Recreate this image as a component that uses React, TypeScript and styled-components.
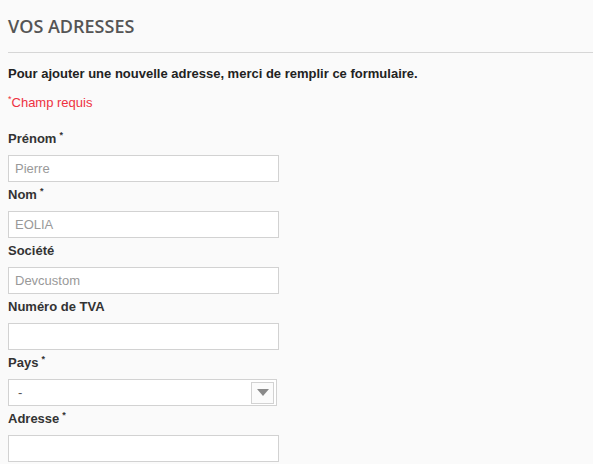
import { createGlobalStyle, styled } from "styled-components";

const GlobalStyle = createGlobalStyle`
  html, body {
    margin: 0;
    padding: 0;
    background: #fafafa;
  }
  body {
    font-family: "Liberation Sans", Arial, sans-serif;
    color: #333;
  }
`;

const Page = styled.div`
  padding: 0 0 0 8px;
  display: flex;
  flex-direction: column;
`;

const Title = styled.h1`
  margin: 0;
  padding: 14px 0 13px;
  font-family: "Open Sans", sans-serif;
  font-size: 18px;
  font-weight: 600;
  line-height: 25px;
  color: #555;
  text-transform: uppercase;
  border-bottom: 1px solid #d6d6d6;
`;

const Intro = styled.p`
  margin: 12px 0 0;
  font-size: 13px;
  font-weight: 700;
  line-height: 18px;
  color: #222;
`;

const Required = styled.p`
  margin: 11px 0 18px;
  font-size: 13px;
  line-height: 18px;
  color: #ee3140;
`;

const Star = styled.sup<{ $gap?: boolean }>`
  font-size: 9px;
  line-height: 0;
  vertical-align: 5px;
  margin-left: ${({ $gap }) => ($gap ? "3px" : "0")};
`;

const Form = styled.form`
  display: flex;
  flex-direction: column;
  gap: 4px;
`;

const Field = styled.div`
  display: flex;
  flex-direction: column;
`;

const Label = styled.label`
  font-size: 13px;
  font-weight: 700;
  line-height: 18px;
  color: #333;
  margin-bottom: 7px;
`;

const Input = styled.input`
  box-sizing: border-box;
  width: 271px;
  height: 27px;
  margin: 0;
  padding: 0 6px;
  border: 1px solid #d2d2d2;
  background: #fff;
  font-family: "Liberation Sans", Arial, sans-serif;
  font-size: 13px;
  color: #333;
  outline: none;

  &::placeholder {
    color: #999;
  }
`;

const SelectBox = styled.div`
  box-sizing: border-box;
  width: 269px;
  height: 27px;
  border: 1px solid #d2d2d2;
  background: #fff;
  display: flex;
  align-items: center;
  justify-content: space-between;
  padding: 0 2px 0 9px;
  font-size: 13px;
  color: #555;
`;

const SelectButton = styled.span`
  box-sizing: border-box;
  width: 23px;
  height: 22px;
  border: 1px solid #d2d2d2;
  background: #fbfbfb;
  display: flex;
  align-items: center;
  justify-content: center;
`;

type FieldDef = {
  label: string;
  required?: boolean;
  placeholder?: string;
  select?: boolean;
};

const fields: FieldDef[] = [
  { label: "Prénom", required: true, placeholder: "Pierre" },
  { label: "Nom", required: true, placeholder: "EOLIA" },
  { label: "Société", placeholder: "Devcustom" },
  { label: "Numéro de TVA" },
  { label: "Pays", required: true, select: true },
  { label: "Adresse", required: true },
];

export default function App() {
  return (
    <>
      <GlobalStyle />
      <Page>
        <Title>Vos adresses</Title>
        <Intro>
          Pour ajouter une nouvelle adresse, merci de remplir ce formulaire.
        </Intro>
        <Required>
          <Star>*</Star>Champ requis
        </Required>
        <Form>
          {fields.map((f) => (
            <Field key={f.label}>
              <Label>
                {f.label}
                {f.required && <Star $gap>*</Star>}
              </Label>
              {f.select ? (
                <SelectBox>
                  <span>-</span>
                  <SelectButton>
                    <svg width="12" height="7" viewBox="0 0 12 7">
                      <path d="M0 0h12L6 7z" fill="#8a8a8a" />
                    </svg>
                  </SelectButton>
                </SelectBox>
              ) : (
                <Input type="text" placeholder={f.placeholder} />
              )}
            </Field>
          ))}
        </Form>
      </Page>
    </>
  );
}
